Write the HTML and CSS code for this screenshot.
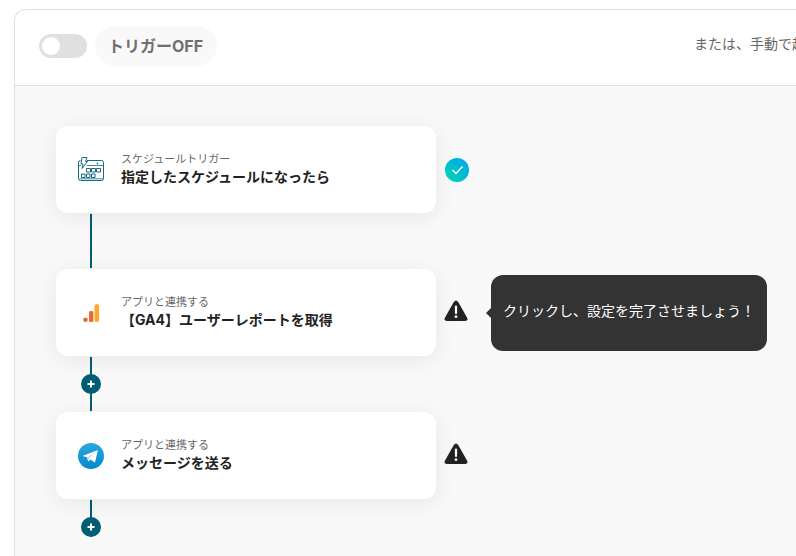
FILE: index.html
```html
<!DOCTYPE html>
<html lang="ja">

<head>
    <meta charset="UTF-8">
    <meta name="viewport" content="width=device-width, initial-scale=1.0">
    <title>フローボット</title>
    <link rel="stylesheet" href="styles.css">
</head>

<body>
    <main class="panel">
        <header class="toolbar">
            <input type="checkbox" id="trigger" class="switch" role="switch">
            <label for="trigger" class="switch-label">トリガーOFF</label>
            <p class="manual">または、手動で起動</p>
        </header>

        <div class="flow">
            <section class="step">
                <button type="button" class="card">
                    <!-- calendar with a bolt -->
                    <svg class="card-icon" viewBox="0 0 26 26" fill="none" stroke="#176b80">
                        <path d="M9 3.500H23.500Q25.500 3.500 25.500 5.500V21.500Q25.500 23.500 23.500 23.500H2.500Q.5 23.500 .5 21.500V5.500Q.5 3.500 2.500 3.500"/>
                        <path d="M1 8.500H3M9 8.500H25M1.500 21.800H25" stroke-width=".8"/>
                        <path d="M4 .5H9L7.500 4.500H9.500L4 11.500L5 7H3Z" fill="#fff"/>
                        <path d="M8.500 11.500h4v3.500h-4zM13.500 11.500h4v3.500h-4zM18.500 11.500h4v3.500h-4zM3.500 17h3.500v3.500h-3.500zM8.500 17h3.500v3.500h-3.500zM13.500 17h3.500v3.500h-3.500z"/>
                        <circle cx="19.500" cy="6.500" r=".5"/>
                    </svg>
                    <span class="card-text">
                        <span class="card-kind">スケジュールトリガー</span>
                        <span class="card-title">指定したスケジュールになったら</span>
                    </span>
                </button>
                <svg class="status" viewBox="0 0 24 24" role="img" aria-label="設定済み">
                    <defs>
                        <linearGradient id="done" x1="0" y1="1" x2="1" y2="0">
                            <stop offset=".1" stop-color="#00d2b4"/>
                            <stop offset=".9" stop-color="#00a8ee"/>
                        </linearGradient>
                    </defs>
                    <circle cx="12" cy="12" r="12" fill="url(#done)"/>
                    <path d="M7.500 12L11 15.500L17.500 8.500" fill="none" stroke="#fff" stroke-width="1.500"/>
                </svg>
            </section>

            <div class="connector"></div>

            <section class="step">
                <button type="button" class="card">
                    <svg class="card-icon" viewBox="0 0 26 26">
                        <rect x="16.500" y="4" width="4.600" height="18" rx="2.200" fill="#fba832"/>
                        <rect x="11" y="11" width="4.400" height="11" rx="1.500" fill="#e66c2c"/>
                        <circle cx="7.500" cy="19.800" r="2.300" fill="#e66c2c"/>
                    </svg>
                    <span class="card-text">
                        <span class="card-kind">アプリと連携する</span>
                        <span class="card-title">【GA4】ユーザーレポートを取得</span>
                    </span>
                </button>
                <svg class="status status-warning" viewBox="0 0 24 24" role="img" aria-label="未設定">
                    <path d="M9.800 3Q12 0 14.200 3L23 18.500Q24.500 22 21 22H3Q-.5 22 1 18.500Z" fill="#222"/>
                    <path d="M12 7.500V14" stroke="#fff" stroke-width="2.200" stroke-linecap="round"/>
                    <circle cx="12" cy="17.700" r="1.400" fill="#fff"/>
                </svg>
                <p class="tooltip">クリックし、設定を完了させましょう！</p>
            </section>

            <div class="connector">
                <button type="button" class="add" aria-label="追加">
                    <svg viewBox="0 0 20 20"><path d="M10 6.500V13.500M6.500 10H13.500" stroke="#fff" stroke-width="2"/></svg>
                </button>
            </div>

            <section class="step">
                <button type="button" class="card">
                    <!-- paper plane -->
                    <svg class="card-icon" viewBox="0 0 26 26">
                        <defs>
                            <linearGradient id="sky" x1="0" y1="0" x2="0" y2="1">
                                <stop offset="0" stop-color="#28a9df"/>
                                <stop offset="1" stop-color="#0888cd"/>
                            </linearGradient>
                        </defs>
                        <circle cx="13" cy="13" r="13" fill="url(#sky)"/>
                        <path d="M5 12.800L18.800 7.400Q19.900 7 19.600 8.300L17.300 18.400Q17 19.600 16 18.900L12.600 16.400L10.900 18Q10.300 18.600 10.100 17.900L9 14.300L5.300 13.300Q4.600 13.100 5 12.800Z" fill="#fff"/>
                        <path d="M9 14.300L16.500 9.600L11 14.900L10.500 18.200Q10.200 18.200 10.100 17.900Z" fill="#c5dced"/>
                    </svg>
                    <span class="card-text">
                        <span class="card-kind">アプリと連携する</span>
                        <span class="card-title">メッセージを送る</span>
                    </span>
                </button>
                <svg class="status status-warning" viewBox="0 0 24 24" role="img" aria-label="未設定">
                    <path d="M9.800 3Q12 0 14.200 3L23 18.500Q24.500 22 21 22H3Q-.5 22 1 18.500Z" fill="#222"/>
                    <path d="M12 7.500V14" stroke="#fff" stroke-width="2.200" stroke-linecap="round"/>
                    <circle cx="12" cy="17.700" r="1.400" fill="#fff"/>
                </svg>
            </section>

            <div class="connector connector-last">
                <button type="button" class="add" aria-label="追加">
                    <svg viewBox="0 0 20 20"><path d="M10 6.500V13.500M6.500 10H13.500" stroke="#fff" stroke-width="2"/></svg>
                </button>
            </div>
        </div>
    </main>
</body>

</html>
```

FILE: styles.css
```css
* {
    box-sizing: border-box;
}

body {
    margin: 0;
    padding: 9px 0 0 14px;
    min-height: 100vh;
    display: flex;
    background: #fff;
    color: #222;
    font-family: Inter, "Noto Sans CJK JP", sans-serif;
    font-size: 14px;
    overflow: hidden;
}

button {
    font: inherit;
    color: inherit;
    border: none;
    padding: 0;
    cursor: pointer;
}

p {
    margin: 0;
}

.panel {
    flex: 1;
    min-width: 0;
    border: 1px solid #ddd;
    border-width: 1px 0 0 1px;
    border-radius: 12px 0 0 0;
    background: #f9f9f9;
    overflow: hidden;
}

/* top bar */
.toolbar {
    display: flex;
    align-items: center;
    padding: 16px 0 19px 24px;
    border-bottom: 1px solid #ddd;
    background: #fff;
}

.switch {
    appearance: none;
    width: 48px;
    height: 24px;
    margin: 0 8px 0 0;
    padding: 3px;
    border-radius: 12px;
    background: #e0e0e0;
    cursor: pointer;
}

.switch::before {
    content: "";
    display: block;
    width: 18px;
    height: 18px;
    border-radius: 50%;
    background: #fff;
}

.switch:checked {
    background: #005e73;
}

.switch:checked::before {
    margin-left: auto;
}

.switch-label {
    padding: 0 14px 0 13px;
    border-radius: 20px;
    background: #f9f9f9;
    color: #707070;
    font-size: 16px;
    font-weight: bold;
    line-height: 40px;
}

.manual {
    width: 102px;
    margin-left: auto;
    padding-bottom: 4px;
    color: #666;
    line-height: 20px;
    white-space: nowrap;
}

/* steps */
.flow {
    padding: 40px 0 16px 41px;
}

.step {
    display: flex;
    align-items: center;
}

.card {
    display: flex;
    align-items: center;
    gap: 17px;
    width: 380px;
    height: 87px;
    padding: 0 22px;
    border-radius: 12px;
    background: #fff;
    box-shadow: 0 4px 24px rgba(0, 0, 0, 0.08);
    text-align: left;
}

.card-icon {
    width: 26px;
    height: 26px;
}

.card-text {
    display: flex;
    flex-direction: column;
    padding-bottom: 2px;
}

.card-kind {
    color: #666;
    font-size: 11px;
    line-height: 16px;
}

.card-title {
    font-weight: bold;
    line-height: 20px;
}

.status {
    width: 24px;
    height: 24px;
    margin-left: 9px;
}

.status-warning {
    margin: 0 0 4px 8px;
}

.tooltip {
    position: relative;
    margin: -10px 0 -10px 23px;
    padding: 24px 12px 28px;
    border-radius: 12px;
    background: #333;
    color: #fff;
    line-height: 24px;
    white-space: nowrap;
}

.tooltip::before {
    content: "";
    position: absolute;
    left: -5px;
    top: 50%;
    margin-top: -5px;
    border: solid transparent;
    border-width: 5px 5px 5px 0;
    border-right-color: #333;
}

/* lines between the cards */
.connector {
    display: flex;
    align-items: center;
    justify-content: center;
    width: 20px;
    height: 54px;
    margin: 1px 0 1px 25px;
    background: linear-gradient(#005e73, #005e73) center / 2px 100% no-repeat;
}

.connector-last {
    height: 37px;
    align-items: flex-end;
}

.add {
    width: 20px;
    height: 20px;
    border-radius: 50%;
    background: #005e73;
}

.add svg {
    display: block;
}
```
